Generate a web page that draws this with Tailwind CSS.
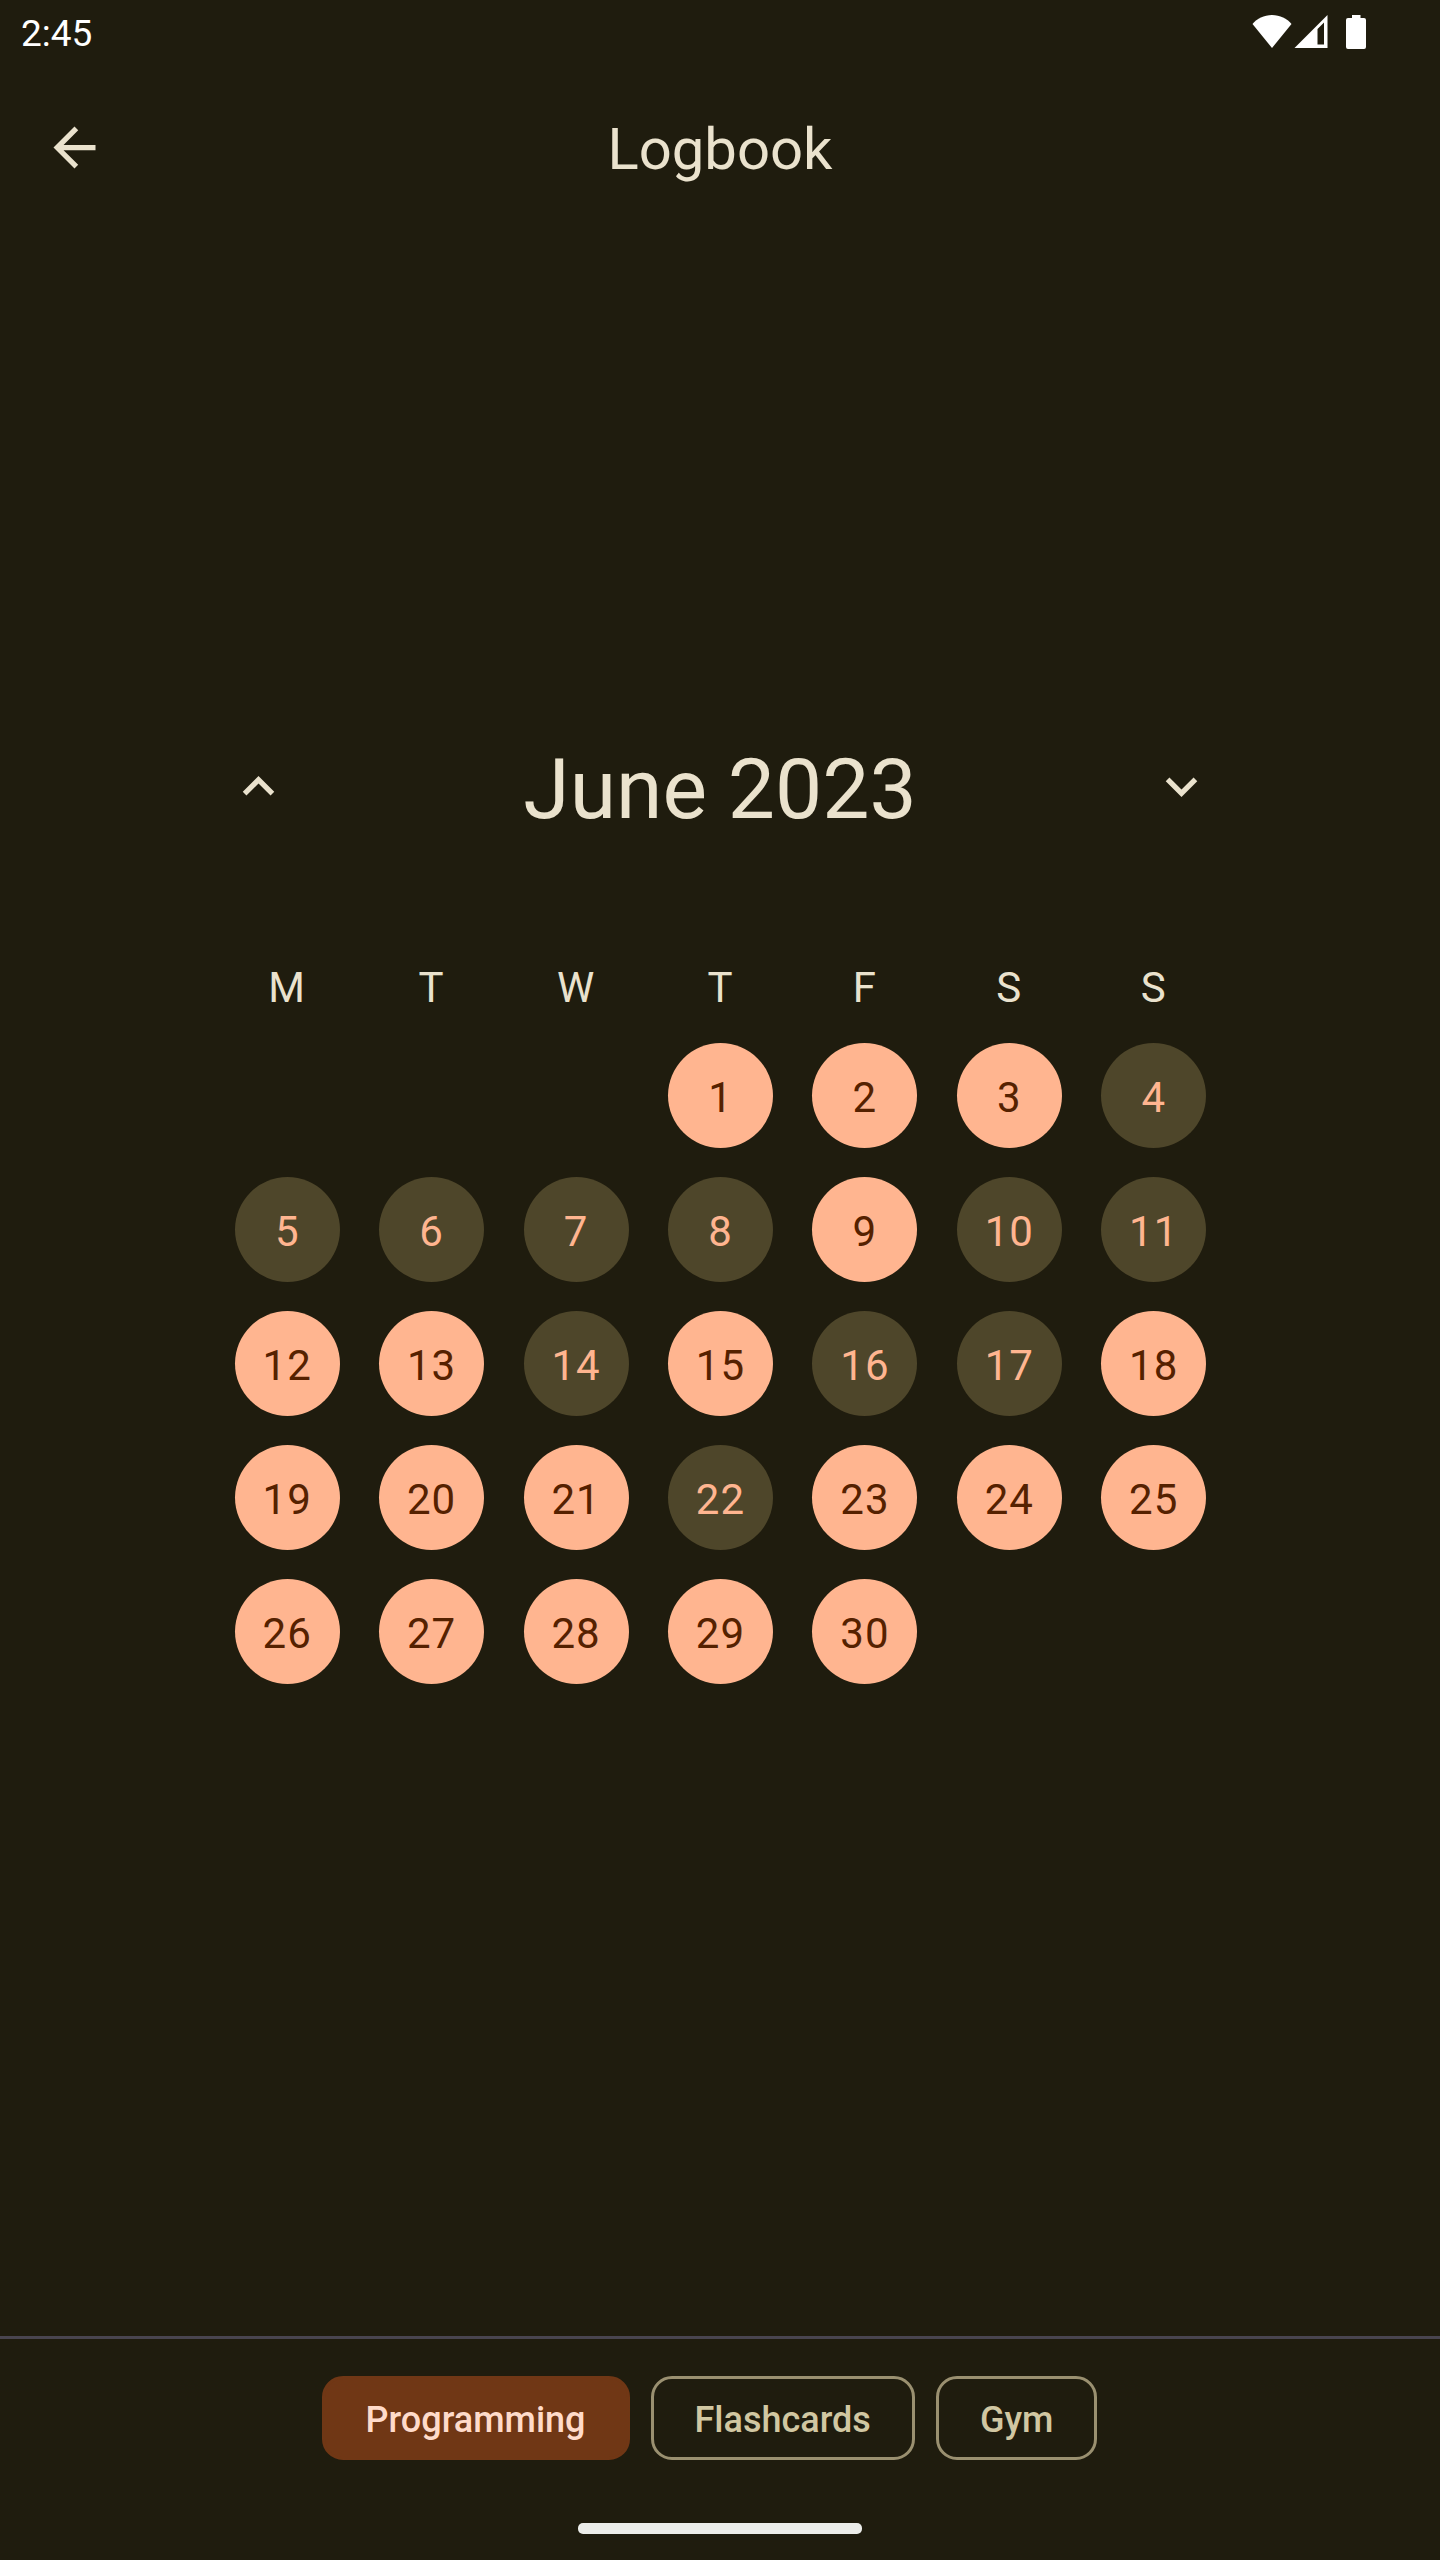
<!DOCTYPE html>
<html lang="en">
<head>
<meta charset="utf-8">
<meta name="viewport" content="width=device-width, initial-scale=1">
<title>Logbook</title>
<script src="https://cdn.jsdelivr.net/npm/@tailwindcss/browser@4"></script>
</head>
<body class="bg-[#1f1c0e] font-[Roboto,sans-serif] text-[#eae2cd]">
<div class="flex min-h-screen flex-col">

  <!-- Status bar -->
  <div class="flex h-[63px] items-center justify-between pl-[21px] pr-[74px] text-white">
    <time class="pt-1 text-[37px] leading-[58px]">2:45</time>
    <div class="flex items-center">
      <svg class="h-[34px] w-[40px]" viewBox="0 0 40 34" fill="currentColor" role="img" aria-label="Wi-Fi"><path d="M20 33L.5 9C5 3.500 12 0 20 0s15 3.500 19.500 9z"/></svg>
      <svg class="ml-0.5 h-[34px] w-[34px]" viewBox="0 0 34 34" fill="currentColor" role="img" aria-label="Mobile signal"><path fill-rule="evenodd" d="M33.500 0v33H.5zM23.500 14v15.500H30V7.500z"/></svg>
      <svg class="ml-[18px] h-[34px] w-[20px]" viewBox="0 0 20 34" fill="currentColor" role="img" aria-label="Battery"><path d="M6 0h8.500v3H18a2 2 0 0 1 2 2v27a2 2 0 0 1-2 2H2a2 2 0 0 1-2-2V5a2 2 0 0 1 2-2h4z"/></svg>
    </div>
  </div>

  <!-- App bar -->
  <header class="grid h-[168px] grid-cols-[126px_1fr_126px] items-center px-[11px]">
    <button type="button" aria-label="Back" class="flex size-[126px] items-center justify-center">
      <svg class="size-[63px]" viewBox="0 0 24 24" fill="currentColor" aria-hidden="true"><path d="M20 11H7.830l5.590-5.590L12 4l-8 8 8 8 1.410-1.410L7.830 13H20v-2z"/></svg>
    </button>
    <h1 class="pt-1 text-center text-[58px] leading-[74px]">Logbook</h1>
  </header>

  <!-- Calendar -->
  <main class="flex flex-1 flex-col items-center justify-center">
    <section class="min-h-[1121px] w-full max-w-[1050px]" aria-labelledby="month">
      <div class="flex h-[126px] items-center justify-between">
        <button type="button" aria-label="Previous month" class="flex size-[126px] items-center justify-center">
          <svg class="size-[63px]" viewBox="0 0 24 24" fill="currentColor" aria-hidden="true"><path d="M12 8l-6 6 1.410 1.410L12 10.830l4.590 4.580L18 14z"/></svg>
        </button>
        <h2 id="month" class="pt-1.5 text-[84px] leading-[105px]">June 2023</h2>
        <button type="button" aria-label="Next month" class="flex size-[126px] items-center justify-center">
          <svg class="size-[63px]" viewBox="0 0 24 24" fill="currentColor" aria-hidden="true"><path d="M16.590 8.590L12 13.170 7.410 8.590 6 10l6 6 6-6z"/></svg>
        </button>
      </div>

      <div class="mt-[105px] pl-5 pr-[19px]">
        <table class="w-full table-fixed border-collapse text-center text-[42px] leading-[63px] tracking-wide">
          <thead>
            <tr id="weekdays"></tr>
          </thead>
          <tbody id="days"></tbody>
        </table>
      </div>
    </section>
  </main>

  <!-- Habit picker -->
  <footer class="border-t-[3px] border-[#49454f]">
    <div class="flex justify-center pt-[37px] text-[36px] font-medium leading-[53px] text-[#d1c7a2]">
      <button type="button" aria-pressed="true" class="mr-[21px] h-[84px] rounded-[21px] border-[3px] border-[#703715] bg-[#703715] px-[41px] pt-1 text-[#ffdbca]">Programming</button>
      <button type="button" aria-pressed="false" class="mr-[21px] h-[84px] rounded-[21px] border-[3px] border-[#9a9070] px-[41px] pt-1">Flashcards</button>
      <button type="button" aria-pressed="false" class="mr-[21px] h-[84px] rounded-[21px] border-[3px] border-[#9a9070] px-[41px] pt-1">Gym</button>
    </div>
    <div class="flex justify-center pb-[26px] pt-[63px]">
      <div class="h-[11px] w-[284px] rounded-[5px] bg-[#ecedea]"></div>
    </div>
  </footer>
</div>

<script>
  const weekdays = ['Monday', 'Tuesday', 'Wednesday', 'Thursday', 'Friday', 'Saturday', 'Sunday'];
  const missed = new Set([4, 5, 6, 7, 8, 10, 11, 14, 16, 17, 22]);
  const firstColumn = 3;
  const dayCount = 30;

  document.getElementById('weekdays').innerHTML = weekdays
    .map(name => `<th scope="col" abbr="${name}" class="p-0 pb-2.5 pt-0.5 font-normal">${name[0]}</th>`)
    .join('');

  let rows = '';
  for (let start = 1 - firstColumn; start <= dayCount; start += 7) {
    rows += '<tr>';
    for (let day = start; day < start + 7; day++) {
      if (day < 1 || day > dayCount) {
        rows += '<td></td>';
        continue;
      }
      const tone = missed.has(day) ? 'bg-[#4e462a] text-[#ffb590]' : 'bg-[#ffb590] text-[#552100]';
      rows += `<td class="p-0 pb-[15px] pt-[14px]"><div class="mx-auto flex size-[105px] items-center justify-center rounded-full pt-1 ${tone}">${day}</div></td>`;
    }
    rows += '</tr>';
  }
  document.getElementById('days').innerHTML = rows;
</script>
</body>
</html>
